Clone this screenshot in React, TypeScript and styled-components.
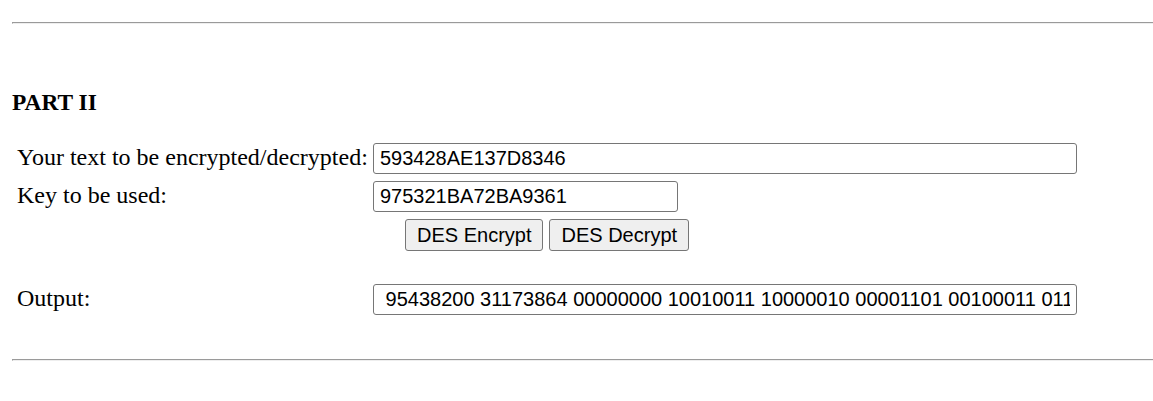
import { createGlobalStyle, styled } from 'styled-components';

const GlobalStyle = createGlobalStyle`
  html, body {
    margin: 0;
    padding: 0;
    background: #ffffff;
    color: #000000;
    font-family: "Liberation Serif", "Times New Roman", serif;
    font-size: 20px;
  }
`;

const Page = styled.div`
  padding: 22px 0 0 12px;
  overflow: hidden;
  height: 401px;
  box-sizing: border-box;
`;

const Rule = styled.hr`
  margin: 0;
  height: 0;
  border: none;
  border-top: 1px solid #9a9a9a;
  border-left: 1px solid #9a9a9a;
  border-bottom: 1px solid #eeeeee;
  width: 1200px;
`;

const Title = styled.h3`
  margin: 65px 0 0 0;
  font-size: 23.4px;
  font-weight: bold;
  line-height: 27px;
`;

const Form = styled.div`
  display: grid;
  grid-template-columns: 356px 1fr;
  row-gap: 7px;
  margin-top: 27px;
  padding-left: 5px;
`;

const Label = styled.div`
  font-size: 24px;
  line-height: 27px;
  padding-top: 1px;
  white-space: nowrap;
`;

const Field = styled.input<{ $width: number }>`
  box-sizing: border-box;
  width: ${(p) => p.$width}px;
  height: 31px;
  margin: 0;
  padding: 3px 6px;
  border: 1px solid #767676;
  border-radius: 3px;
  font-family: "Liberation Sans", Arial, sans-serif;
  font-size: 20px;
  color: #000000;
  background: #ffffff;
  outline: none;
`;

const Actions = styled.div`
  display: flex;
  gap: 6px;
  margin-left: 32px;
`;

const Button = styled.button`
  box-sizing: border-box;
  height: 32px;
  padding: 1px 11px;
  border: 1px solid #767676;
  border-radius: 3px;
  background: #efefef;
  font-family: "Liberation Sans", Arial, sans-serif;
  font-size: 20px;
  color: #000000;
`;

const Spacer = styled.div`
  grid-column: 1 / 3;
  height: 19px;
`;

const BottomRule = styled(Rule)`
  margin-top: 44px;
`;

const output =
  ' 95438200 31173864 00000000 10010011 10000010 00001101 00100011 01100110 11101000 00110101';

export default function App() {
  return (
    <>
      <GlobalStyle />
      <Page>
        <Rule />
        <Title>PART II</Title>
        <Form>
          <Label>Your text to be encrypted/decrypted:</Label>
          <Field $width={704} defaultValue="593428AE137D8346" />
          <Label>Key to be used:</Label>
          <Field $width={305} defaultValue="975321BA72BA9361" />
          <div />
          <Actions>
            <Button>DES Encrypt</Button>
            <Button>DES Decrypt</Button>
          </Actions>
          <Spacer />
          <Label>Output:</Label>
          <Field $width={704} defaultValue={output} readOnly />
        </Form>
        <BottomRule />
      </Page>
    </>
  );
}
